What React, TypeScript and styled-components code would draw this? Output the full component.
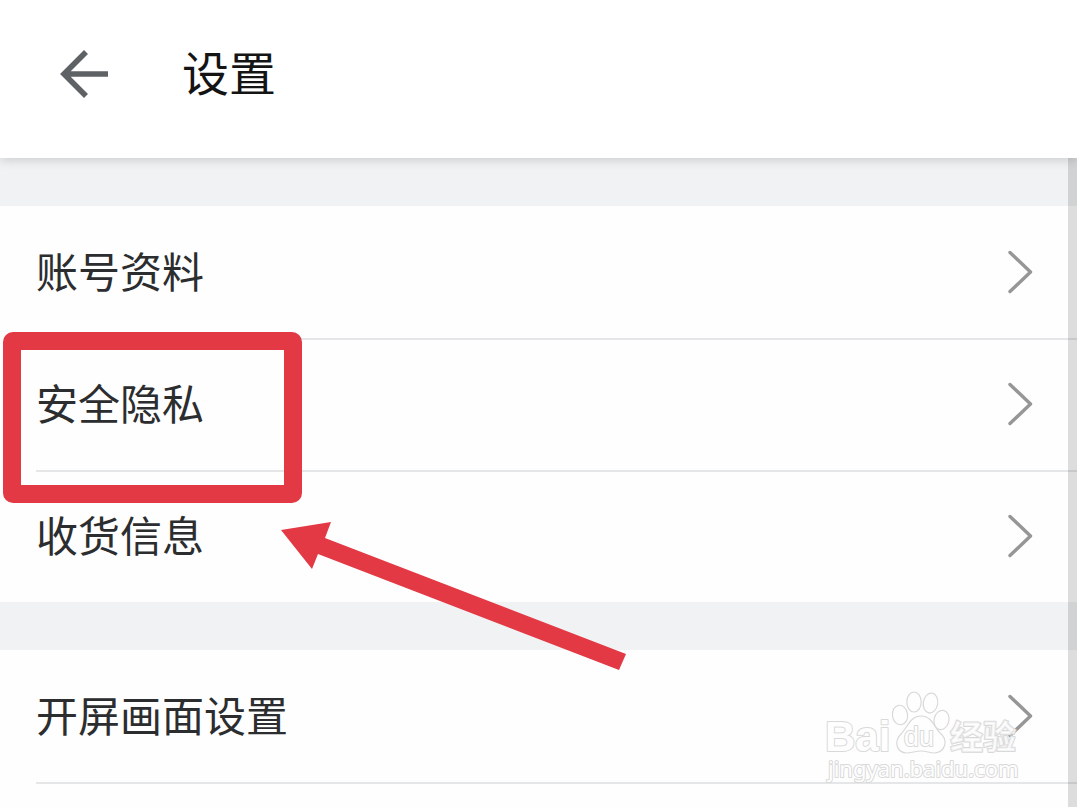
import React from "react";
import styled, { createGlobalStyle } from "styled-components";

const GlobalStyle = createGlobalStyle`
  * { box-sizing: border-box; }
  body {
    margin: 0;
    background: #fefefe;
    font-family: "Noto Sans CJK SC", "Noto Sans", sans-serif;
  }
`;

const Page = styled.div`
  position: relative;
  display: flex;
  flex-direction: column;
  min-height: 100vh;
  overflow: hidden;
`;

const Header = styled.header`
  position: relative;
  display: flex;
  align-items: center;
  gap: 72px;
  height: 158px;
  padding: 0 58px 10px;
  background: #ffffff;
  box-shadow: 0 2px 10px rgba(0, 0, 0, 0.16);
  z-index: 1;
`;

const BackButton = styled.button`
  display: flex;
  padding: 0;
  border: 0;
  background: none;
  color: #5f6265;
`;

const Title = styled.h1`
  margin: 0;
  padding-bottom: 6px;
  font-size: 47px;
  line-height: 64px;
  font-weight: 400;
  color: #141414;
`;

const Content = styled.main`
  position: relative;
  flex: 1;
`;

const Group = styled.ul`
  margin: 0;
  padding: 0;
  list-style: none;
  border-top: 48px solid #f1f2f4;
`;

const Item = styled.li`
  padding-left: 36px;
`;

const Row = styled.a<{ $divided?: boolean }>`
  display: flex;
  align-items: center;
  justify-content: space-between;
  height: 132px;
  padding-right: 44px;
  color: #2c2d2f;
  text-decoration: none;
  box-shadow: ${(p) => (p.$divided ? "0 2px 0 #e5e6e7" : "none")};
`;

const Label = styled.span`
  padding-bottom: 4px;
  font-size: 42px;
  line-height: 60px;
`;

const ScrollTrack = styled.div`
  position: absolute;
  top: 0;
  right: 0;
  bottom: 0;
  width: 9px;
  background: rgba(0, 0, 0, 0.13);
`;

const Highlight = styled.div`
  position: absolute;
  top: 332px;
  left: 3px;
  width: 299px;
  height: 171px;
  border: 18px solid #e33945;
  border-radius: 10px;
  z-index: 2;
  pointer-events: none;
`;

const Pointer = styled.svg`
  position: absolute;
  top: 500px;
  left: 270px;
  z-index: 2;
  pointer-events: none;
`;

const Watermark = styled.svg`
  position: absolute;
  right: 50px;
  top: 680px;
  z-index: 2;
  pointer-events: none;

  text {
    paint-order: stroke;
    stroke-width: 2px;
    stroke-linejoin: round;
  }
`;

const Chevron = () => (
  <svg width="28" height="48" viewBox="0 0 28 48" fill="none" stroke="#969696" strokeWidth="3.4" strokeLinecap="round" strokeLinejoin="round" aria-hidden="true">
    <path d="M5 4.5 L25.5 24 L5 43.5" />
  </svg>
);

type Entry = { label: string; divided: boolean };

const groups: Entry[][] = [
  [
    { label: "账号资料", divided: true },
    { label: "安全隐私", divided: true },
    { label: "收货信息", divided: false },
  ],
  [{ label: "开屏画面设置", divided: true }],
];

export default function App() {
  return (
    <Page>
      <GlobalStyle />
      <Header>
        <BackButton aria-label="返回">
          <svg width="52" height="52" viewBox="0 0 52 52" fill="none" stroke="currentColor" strokeWidth="5.6" aria-hidden="true">
            <path d="M28 4 L6 26 L28 48 M6 26 H50" />
          </svg>
        </BackButton>
        <Title>设置</Title>
      </Header>
      <Content>
        {groups.map((entries) => (
          <Group key={entries[0].label}>
            {entries.map((entry) => (
              <Item key={entry.label}>
                <Row href="#" $divided={entry.divided}>
                  <Label>{entry.label}</Label>
                  <Chevron />
                </Row>
              </Item>
            ))}
          </Group>
        ))}
        <ScrollTrack />
      </Content>
      <Highlight />
      <Pointer width="370" height="190" viewBox="0 0 370 190" aria-hidden="true">
        <path d="M11 30 L61 22 L55 38 L356 154 L349 170 L48 54 L42 69 Z" fill="#e33945" />
      </Pointer>
      <Watermark width="210" height="110" viewBox="0 0 210 110" fill="#fefefe" stroke="#d9d9d9" strokeWidth="1.2" aria-hidden="true">
        <text x="8" y="71" fontSize="42" fontWeight="700" fontFamily="Liberation Sans, sans-serif">Bai</text>
        <text x="133" y="69" fontSize="33" fontWeight="700" fillOpacity="0.7" fontFamily="Noto Sans CJK SC, sans-serif">经验</text>
        <g fill="none">
          <ellipse cx="83" cy="35" rx="7.6" ry="9.8" transform="rotate(-8 83 35)" />
          <ellipse cx="97" cy="22" rx="7.2" ry="10" />
          <ellipse cx="113.5" cy="23" rx="7.2" ry="10" transform="rotate(10 113.5 23)" />
          <ellipse cx="124.5" cy="40" rx="7.4" ry="9.8" transform="rotate(12 124.5 40)" />
          <path d="M104 36 C115 36 117 47 123 53 C132 60 128 72 118 73 C112 73 110 71 104 71 C98 71 95 73 89 73 C79 72 77 61 84 54 C91 47 93 36 104 36 Z" />
        </g>
        <text x="87" y="66" fontSize="27" fontFamily="Liberation Sans, sans-serif">du</text>
        <text x="11" y="97" fontSize="22" fontFamily="Noto Sans, sans-serif">jingyan.baidu.com</text>
      </Watermark>
    </Page>
  );
}
